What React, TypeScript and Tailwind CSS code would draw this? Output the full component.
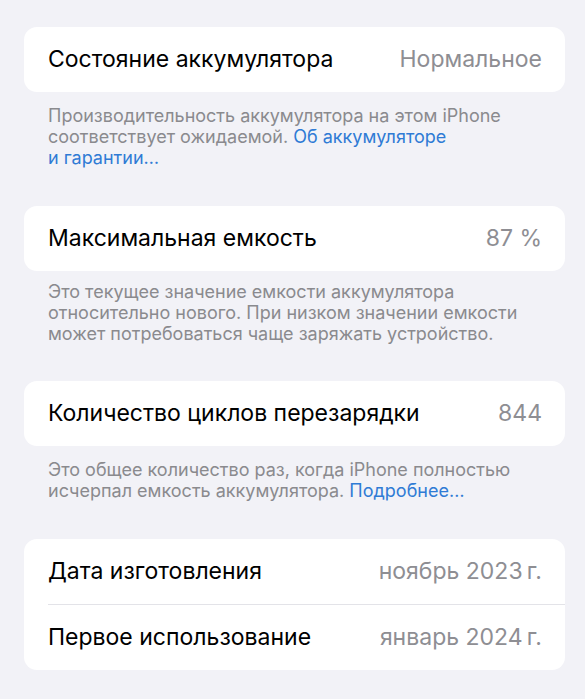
import React from "react";

type Row = { label: string; value: string };

const font = { fontFamily: "Inter, 'Noto Sans', sans-serif" };

function Card({ rows }: { rows: Row[] }) {
  return (
    <div className="ml-[24px] mr-[20px] rounded-[13px] bg-white">
      {rows.map((r, i) => (
        <div key={r.label}>
          {i > 0 && <div className="ml-[24px] h-px bg-[#e3e3e8]" />}
          <div className="flex h-[65px] items-center justify-between pl-[24px] pr-[23px]">
            <span className="text-[23px] text-black">{r.label}</span>
            <span className="text-[23px] text-[#8e8e93]">{r.value}</span>
          </div>
        </div>
      ))}
    </div>
  );
}

function Footer({ children, tight }: { children: React.ReactNode; tight?: boolean }) {
  return (
    <p
      className={
        tight
          ? "mt-[10px] pl-[48px] pr-[16px] text-[18px] leading-[21px] text-[#8a8a8e]"
          : "mt-[13px] pl-[48px] pr-[16px] text-[18px] leading-[21px] text-[#8a8a8e]"
      }
    >
      {children}
    </p>
  );
}

function Link({ children }: { children: React.ReactNode }) {
  return <span className="text-[#2f7bd5]">{children}</span>;
}

export default function App() {
  return (
    <div className="min-h-[699px] w-full bg-[#f2f2f7] pt-[27px] antialiased" style={font}>
      <Card rows={[{ label: "Состояние аккумулятора", value: "Нормальное" }]} />
      <Footer>
        Производительность аккумулятора на этом iPhone
        <br />
        соответствует ожидаемой. <Link>Об аккумуляторе</Link>
        <br />
        <Link>и гарантии…</Link>
      </Footer>

      <div className="mt-[38px]">
        <Card rows={[{ label: "Максимальная емкость", value: "87 %" }]} />
      </div>
      <Footer tight>
        Это текущее значение емкости аккумулятора
        <br />
        относительно нового. При низком значении емкости
        <br />
        может потребоваться чаще заряжать устройство.
      </Footer>

      <div className="mt-[37px]">
        <Card rows={[{ label: "Количество циклов перезарядки", value: "844" }]} />
      </div>
      <Footer>
        Это общее количество раз, когда iPhone полностью
        <br />
        исчерпал емкость аккумулятора. <Link>Подробнее…</Link>
      </Footer>

      <div className="mt-[38px]">
        <Card
          rows={[
            { label: "Дата изготовления", value: "ноябрь 2023\u202Fг." },
            { label: "Первое использование", value: "январь 2024\u202Fг." },
          ]}
        />
      </div>
    </div>
  );
}
